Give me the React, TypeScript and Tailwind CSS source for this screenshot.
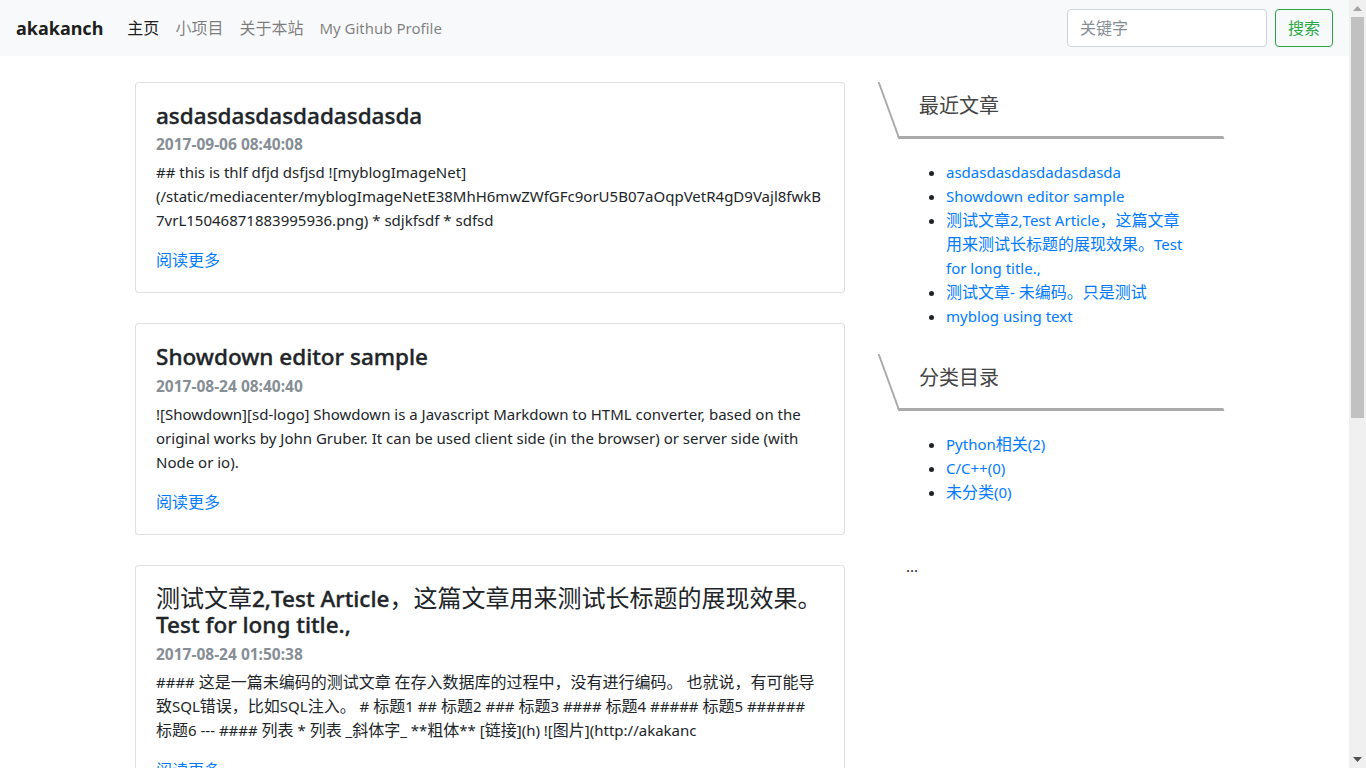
import React from "react";

const FONT = { fontFamily: '"Noto Sans", "Noto Sans CJK SC", sans-serif' };

function J({ s, cjk = "" }: { s: string; cjk?: string }) {
  const parts = s.split(/([\u2e80-\u9fff\uff00-\uffef]+)/);
  return (
    <>
      {parts.map((p, i) =>
        i % 2 === 1 ? (
          <span key={i} className={"text-[1.0667em] leading-none " + cjk}>
            {p}
          </span>
        ) : (
          <React.Fragment key={i}>{p}</React.Fragment>
        )
      )}
    </>
  );
}

type Post = { title: string; date: string; body: React.ReactNode };

const posts: Post[] = [
  {
    title: "asdasdasdasdadasdasda",
    date: "2017-09-06 08:40:08",
    body: (
      <>
        ## this is thlf dfjd dsfjsd ![myblogImageNet]
        <br />
        (/static/mediacenter/myblogImageNetE38MhH6mwZWfGFc9orU5B07aOqpVetR4gD9Vajl8fwkB
        <br />
        7vrL15046871883995936.png) * sdjkfsdf * sdfsd
      </>
    ),
  },
  {
    title: "Showdown editor sample",
    date: "2017-08-24 08:40:40",
    body: (
      <>
        ![Showdown][sd-logo] Showdown is a Javascript Markdown to HTML converter, based on the original works
        by John Gruber. It can be used client side (in the browser) or server side (with Node or io).
      </>
    ),
  },
  {
    title: "测试文章2,Test Article，这篇文章用来测试长标题的展现效果。Test for long title.,",
    date: "2017-08-24 01:50:38",
    body: (
      <J s="#### 这是一篇未编码的测试文章 在存入数据库的过程中，没有进行编码。 也就说，有可能导致SQL错误，比如SQL注入。 # 标题1 ## 标题2 ### 标题3 #### 标题4 ##### 标题5 ###### 标题6 --- #### 列表 * 列表 _斜体字_ **粗体** [链接](h) ![图片](http://akakanc" />
    ),
  },
];

function Card({ p }: { p: Post }) {
  return (
    <div className="mb-[30px] w-[710px] rounded border border-black/[0.125] bg-white p-5">
      <h4 className="text-[22.5px] font-medium leading-[26.4px] text-[#212529] [-webkit-text-stroke:0.35px_#212529]">
        <J s={p.title} cjk="font-normal [-webkit-text-stroke:0px]" />
      </h4>
      <div className="mt-[3px] text-[15.5px] font-bold leading-[24px] text-[#868e96]">{p.date}</div>
      <p className="mt-[4px] break-words text-[15px] leading-[24px] text-[#212529]">{p.body}</p>
      <a className="mt-4 block text-[15px] leading-[24px] text-[#007bff]">
        <J s="阅读更多" />
      </a>
    </div>
  );
}

function SideHead({ t }: { t: string }) {
  return (
    <div className="relative h-[57px] w-[326px] pl-[31px] pt-[9px]">
      <div className="absolute inset-0 skew-x-[20deg] border-b-[3px] border-l-2 border-[#aaaaaa]" />
      <span
        className="relative text-[20px] leading-[28px] text-[#444444]"
        style={{ fontFamily: '"Noto Sans CJK SC", sans-serif' }}
      >
        {t}
      </span>
    </div>
  );
}

const recent = [
  "asdasdasdasdadasdasda",
  "Showdown editor sample",
  "测试文章2,Test Article，这篇文章用来测试长标题的展现效果。Test for long title.,",
  "测试文章- 未编码。只是测试",
  "myblog using text",
];
const cats = ["Python相关(2)", "C/C++(0)", "未分类(0)"];

function SideList({ items }: { items: string[] }) {
  return (
    <ul className="mt-[21px] w-[303px] list-disc pl-[58px] text-[15px] leading-[24px] text-[#212529]">
      {items.map((it) => (
        <li key={it}>
          <a className="text-[#007bff]">
            <J s={it} />
          </a>
        </li>
      ))}
    </ul>
  );
}

function Scrollbar() {
  return (
    <div className="flex h-screen w-[17px] shrink-0 flex-col bg-[#f0f0f0]">
      <div className="flex h-[17px] items-center justify-center">
        <svg width="9" height="5" viewBox="0 0 9 5">
          <polygon points="0,5 4.5,0 9,5" fill="#a3a3a3" />
        </svg>
      </div>
      <div className="mx-[2px] h-[401px] bg-[#c1c1c1]" />
      <div className="flex-1" />
      <div className="flex h-[17px] items-center justify-center">
        <svg width="9" height="5" viewBox="0 0 9 5">
          <polygon points="0,0 9,0 4.5,5" fill="#505050" />
        </svg>
      </div>
    </div>
  );
}

export default function App() {
  return (
    <div className="flex h-screen overflow-hidden bg-white" style={FONT}>
      <div className="flex-1 overflow-hidden">
        <nav className="flex h-14 items-center bg-[#f8f9fa] px-4">
          <span className="mr-4 text-[18px] font-bold leading-[30px] text-black/90">akakanch</span>
          <div className="flex items-center text-[15px] leading-6">
            <a className="px-2 text-black/90">
              <J s="主页" />
            </a>
            <a className="px-2 text-black/50">
              <J s="小项目" />
            </a>
            <a className="px-2 text-black/50">
              <J s="关于本站" />
            </a>
            <a className="px-2 text-black/50">My Github Profile</a>
          </div>
          <div className="ml-auto flex items-center">
            <input
              placeholder="关键字"
              className="mr-2 h-[38px] w-[200px] rounded border border-[#ced4da] bg-white px-3 text-[16px] text-[#495057] outline-none placeholder:text-[#868e96]"
            />
            <button className="h-[38px] rounded border border-[#28a745] px-3 text-[16px] text-[#28a745]">
              搜索
            </button>
          </div>
        </nav>
        <div className="flex pl-[135px] pt-[26px]">
          <div className="w-[710px] shrink-0">
            {posts.map((p) => (
              <Card key={p.date} p={p} />
            ))}
          </div>
          <div className="ml-[43px] w-[326px] shrink-0">
            <SideHead t="最近文章" />
            <SideList items={recent} />
            <div className="mt-[26px]">
              <SideHead t="分类目录" />
            </div>
            <SideList items={cats} />
            <p className="ml-[18px] mt-[50px] text-[15px] leading-[24px] text-[#212529]">...</p>
          </div>
        </div>
      </div>
      <Scrollbar />
    </div>
  );
}
